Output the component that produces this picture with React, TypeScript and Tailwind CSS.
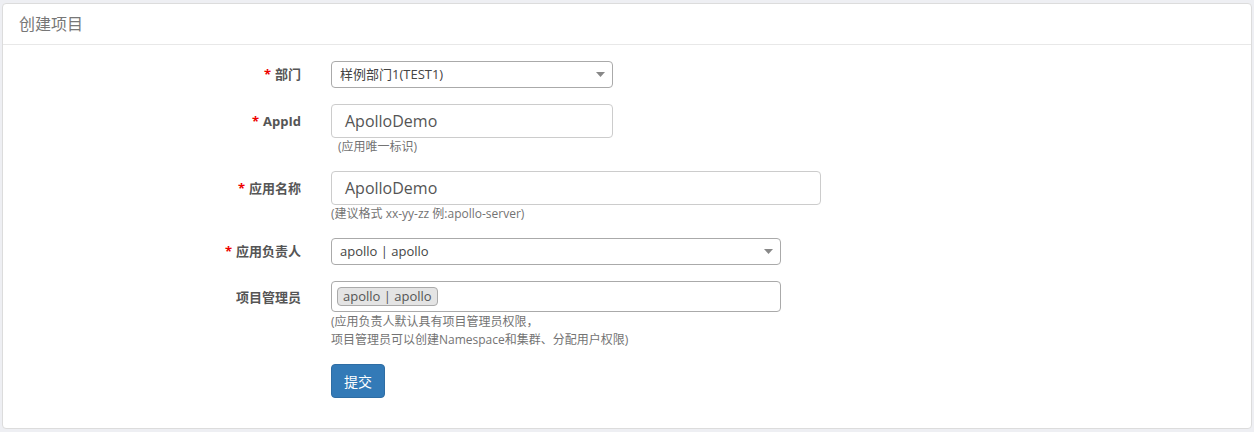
import React from "react";

const font = { fontFamily: '"Open Sans", "Noto Sans CJK SC", sans-serif' };

function Label({ text, required }: { text: string; required?: boolean }) {
  return (
    <div className="w-[298px] shrink-0 text-right text-[13px] font-bold text-[#555]">
      {required && <span className="mr-1 text-[#e00]">*</span>}
      {text}
    </div>
  );
}

function SelectBox({ text, width }: { text: string; width: string }) {
  return (
    <div className={`${width} flex h-[27px] items-center justify-between rounded-[4px] border border-[#aaa] bg-white pl-[8px] pr-[7px] text-[13px] text-[#444]`}>
      <span>{text}</span>
      <svg width="9" height="5" viewBox="0 0 9 5">
        <path d="M0 0 L9 0 L4.5 5 Z" fill="#888" />
      </svg>
    </div>
  );
}

function Help({ children, lh }: { children: React.ReactNode; lh: string }) {
  return <div className={`text-[12px] ${lh} text-[#737373]`}>{children}</div>;
}

export default function App() {
  return (
    <div className="min-h-[432px] bg-[#eeeff3] pt-[3px] pl-[2px] pr-[2px] pb-[3px]" style={font}>
      <div className="h-[426px] rounded-[4px] border border-[#dcdcdc] bg-white">
        <div className="flex h-[41px] items-center border-b border-[#e8e8e8] pl-[16px] text-[16px] text-[#777]">
          创建项目
        </div>
        <div className="pt-[16px]">
          <div className="flex items-center gap-[30px]">
            <Label text="部门" required />
            <SelectBox text="样例部门1(TEST1)" width="w-[282px]" />
          </div>

          <div className="mt-[16px] flex gap-[30px]">
            <div className="pt-[8px]">
              <Label text="AppId" required />
            </div>
            <div>
              <div className="flex h-[34px] w-[282px] items-center rounded-[4px] border border-[#ccc] px-[13px] text-[16px] text-[#555]">
                ApolloDemo
              </div>
              <div className="pl-[7px]">
                <Help lh="leading-[17px]">(应用唯一标识)</Help>
              </div>
            </div>
          </div>

          <div className="mt-[16px] flex gap-[30px]">
            <div className="pt-[8px]">
              <Label text="应用名称" required />
            </div>
            <div>
              <div className="flex h-[34px] w-[490px] items-center rounded-[4px] border border-[#ccc] px-[13px] text-[16px] text-[#555]">
                ApolloDemo
              </div>
              <Help lh="leading-[17px]">(建议格式 xx-yy-zz 例:apollo-server)</Help>
            </div>
          </div>

          <div className="mt-[16px] flex items-center gap-[30px]">
            <Label text="应用负责人" required />
            <SelectBox text="apollo | apollo" width="w-[450px]" />
          </div>

          <div className="mt-[16px] flex gap-[30px]">
            <div className="pt-[7px]">
              <Label text="项目管理员" />
            </div>
            <div>
              <div className="flex h-[31px] w-[450px] items-center rounded-[4px] border border-[#aaa] px-[5px]">
                <span className="flex h-[19px] items-center rounded-[4px] border border-[#aaa] bg-[#e4e4e4] px-[5px] text-[13px] text-[#555]">
                  apollo | apollo
                </span>
              </div>
              <div className="mt-[1px]">
                <Help lh="leading-[18px]">
                  (应用负责人默认具有项目管理员权限，
                  <br />
                  项目管理员可以创建Namespace和集群、分配用户权限)
                </Help>
              </div>
            </div>
          </div>

          <div className="mt-[15px] pl-[328px]">
            <button className="h-[34px] w-[54px] rounded-[4px] border border-[#2e6da4] bg-[#337ab7] text-[14px] text-white">
              提交
            </button>
          </div>
        </div>
      </div>
    </div>
  );
}
